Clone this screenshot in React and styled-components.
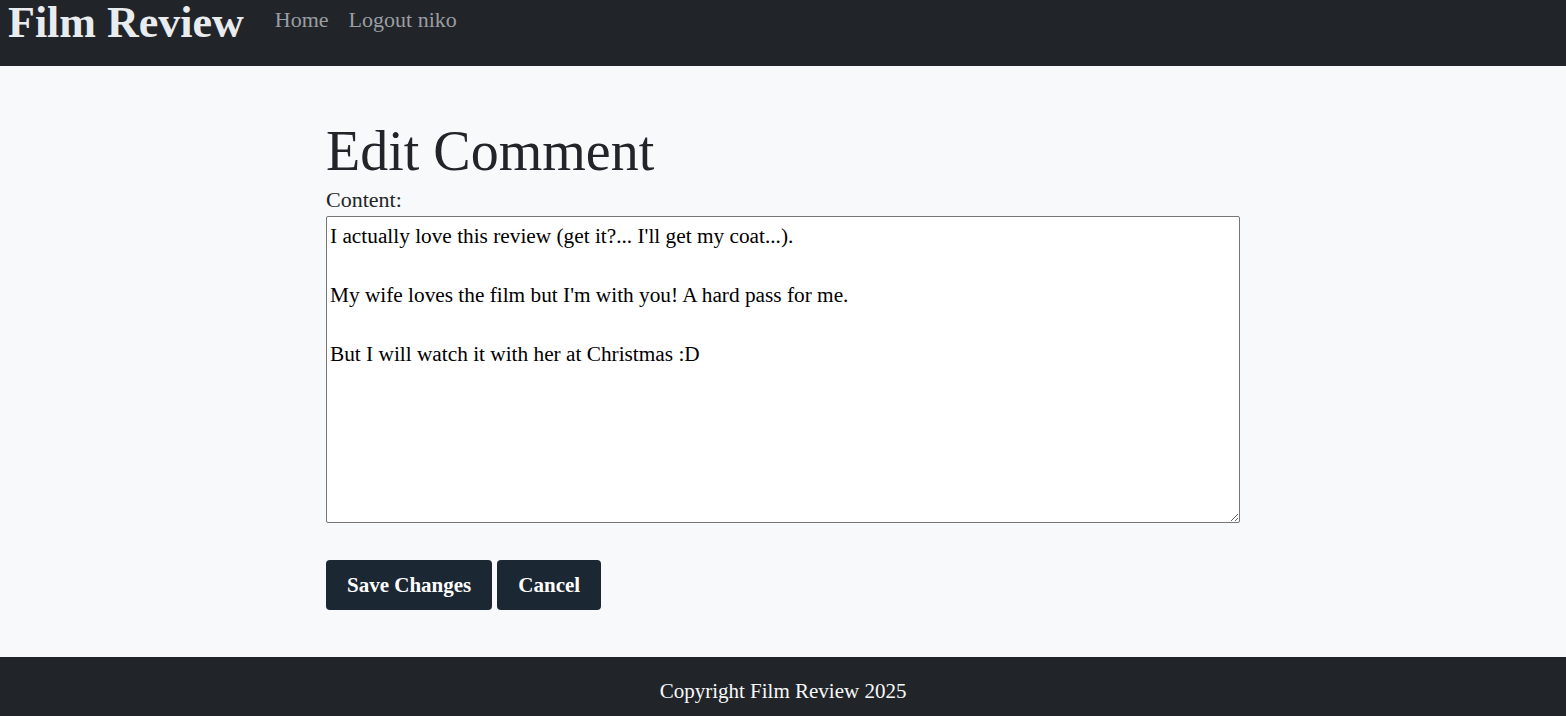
import styled, { createGlobalStyle } from "styled-components";

const GlobalStyle = createGlobalStyle`
	* { box-sizing: border-box; }
	body {
		margin: 0;
		background: #f8f9fa;
		font-family: "Liberation Serif", "DejaVu Serif", serif;
		color: #212529;
	}
`;

export default function App() {
	return (
		<>
			<GlobalStyle />
			<Page>
				<Navbar>
					<Brand>Film Review</Brand>
					<NavLink>Home</NavLink>
					<NavLink>Logout niko</NavLink>
				</Navbar>
				<Main>
					<Title>Edit Comment</Title>
					<Form>
						<Label htmlFor="content">Content:</Label>
						<TextArea
							id="content"
							defaultValue={
								"I actually love this review (get it?... I'll get my coat...).\n\nMy wife loves the film but I'm with you! A hard pass for me.\n\nBut I will watch it with her at Christmas :D"
							}
						/>
						<Buttons>
							<Button type="submit">Save Changes</Button>
							<Button type="button">Cancel</Button>
						</Buttons>
					</Form>
				</Main>
				<Footer>Copyright Film Review 2025</Footer>
			</Page>
		</>
	);
}

const Page = styled.div`
	min-height: 100vh;
	display: flex;
	flex-direction: column;
`;

const Navbar = styled.nav`
	height: 66px;
	background: #212529;
	display: flex;
	align-items: flex-start;
	padding: 0 8px;
	gap: 20px;
`;

const Brand = styled.a`
	font-size: 44px;
	font-weight: 700;
	color: #e9ecef;
	line-height: 46px;
	margin-right: 11px;
`;

const NavLink = styled.a`
	font-size: 22px;
	color: #9a9da1;
	line-height: 40px;
`;

const Main = styled.main`
	flex: 1;
	width: 914px;
	margin: 0 auto;
	padding-top: 52px;
`;

const Title = styled.h1`
	margin: 0;
	font-size: 56px;
	font-weight: 400;
	line-height: 1.2;
	color: #212529;
`;

const Form = styled.form`
	display: flex;
	flex-direction: column;
`;

const Label = styled.label`
	font-size: 22px;
	line-height: 28px;
	margin-top: 1px;
	margin-bottom: 2px;
`;

const TextArea = styled.textarea`
	width: 914px;
	height: 307px;
	font-family: inherit;
	font-size: 21.3px;
	line-height: 29.5px;
	padding: 5px 3px;
	border: 1px solid #767676;
	border-radius: 2px;
	background: #fff;
	color: #000;
`;

const Buttons = styled.div`
	display: flex;
	gap: 5px;
	margin-top: 37px;
	margin-bottom: 47px;
`;

const Button = styled.button`
	height: 50px;
	padding: 0 21px;
	background: #1c2734;
	color: #fff;
	border: none;
	border-radius: 4px;
	font-family: inherit;
	font-size: 21px;
	font-weight: 700;
`;

const Footer = styled.footer`
	background: #212529;
	color: #f8f9fa;
	font-size: 21px;
	text-align: center;
	padding: 22px 0 14px;
	height: 59px;
`;
